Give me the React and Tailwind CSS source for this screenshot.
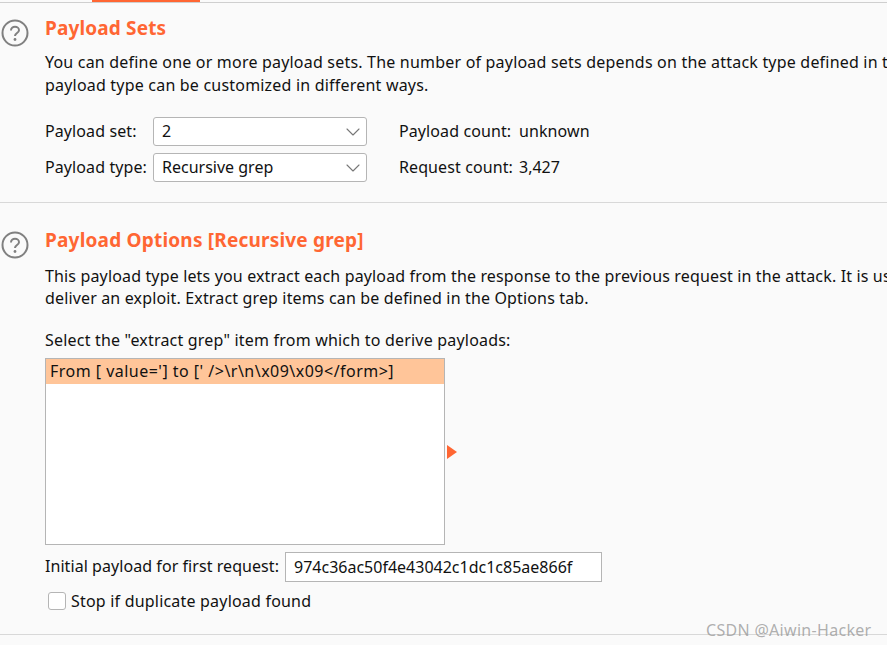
import { ChevronDown } from 'lucide-react';

function HelpIcon() {
  return (
    <svg width="28" height="28" viewBox="0 0 28 28" fill="none" className="shrink-0">
      <circle cx="14" cy="14" r="12.5" stroke="#808080" strokeWidth="2" />
      <path d="M10 11.5c0-2.2 1.8-3.7 4-3.7s4 1.4 4 3.4c0 2.8-4 2.9-4 5.8" stroke="#808080" strokeWidth="2" />
      <circle cx="14" cy="20.5" r="1.4" fill="#808080" />
    </svg>
  );
}

function Dropdown({ value }) {
  return (
    <div className="w-[214px] h-[29px] bg-white border border-[#b5b5b5] rounded-[3px] flex items-center justify-between pl-2 pr-[1px]">
      <span className="pb-[2px]">{value}</span>
      <ChevronDown size={24} strokeWidth={1.1} color="#777777" />
    </div>
  );
}

export default function App() {
  return (
    <div className="h-[645px] w-[887px] overflow-hidden bg-[#fafafa] text-[#111111] text-[16px] leading-[22px] font-['Noto_Sans',sans-serif]">
      {/* tab strip */}
      <div className="h-[3px] border-b border-[#cfcfcf] pl-[92px]">
        <div className="w-[108px] h-[2px] bg-[#ff6633]" />
      </div>

      {/* Payload Sets */}
      <section className="flex gap-[16px] h-[200px] border-b border-[#d8d8d8]">
        <div className="pt-[16px] pl-[1px]"><HelpIcon /></div>
        <div className="min-w-0 flex-1 pt-[13px]">
          <h2 className="text-[19px] leading-[24px] font-bold text-[#ff6633] tracking-[0.15px]">Payload Sets</h2>
          <p className="mt-[11px] whitespace-nowrap tracking-[0.2px]">You can define one or more payload sets. The number of payload sets depends on the attack type defined in the Positions tab.</p>
          <p className="mt-[1px] whitespace-nowrap tracking-[0.2px]">payload type can be customized in different ways.</p>
          <div className="mt-[21px] flex flex-col gap-[7px]">
            <div className="flex items-center">
              <span className="w-[108px] pb-[2px] tracking-[0.1px]">Payload set:</span>
              <Dropdown value="2" />
              <span className="ml-[32px] w-[120px] pb-[2px] tracking-[0.1px]">Payload count:</span>
              <span className="pb-[2px] tracking-[0.1px]">unknown</span>
            </div>
            <div className="flex items-center">
              <span className="w-[108px] pb-[2px] tracking-[0.1px]">Payload type:</span>
              <Dropdown value="Recursive grep" />
              <span className="ml-[32px] w-[120px] pb-[2px] tracking-[0.1px]">Request count:</span>
              <span className="pb-[2px]">3,427</span>
            </div>
          </div>
        </div>
      </section>

      {/* Payload Options */}
      <section className="flex gap-[16px] h-[432px] border-b border-[#d8d8d8]">
        <div className="pt-[28px] pl-[1px]"><HelpIcon /></div>
        <div className="min-w-0 flex-1 pt-[25px]">
          <h2 className="text-[19px] leading-[24px] font-bold text-[#ff6633] tracking-[0.2px]">Payload Options [Recursive grep]</h2>
          <p className="mt-[13px] whitespace-nowrap tracking-[0.15px]">This payload type lets you extract each payload from the response to the previous request in the attack. It is useful in some situations</p>
          <p className="whitespace-nowrap tracking-[0.15px]">deliver an exploit. Extract grep items can be defined in the Options tab.</p>
          <p className="mt-[20px] tracking-[0.2px]">Select the "extract grep" item from which to derive payloads:</p>
          <div className="mt-[7px] flex items-center">
            <div className="w-[400px] h-[187px] bg-white border border-[#b5b5b5]">
              <div className="h-[25px] bg-[#ffc599] pl-[4px] leading-[25px] whitespace-nowrap tracking-[0.48px]">{"From [ value='] to [' />\\r\\n\\x09\\x09</form>]"}</div>
            </div>
            <div className="ml-[2px] w-0 h-0 border-y-[7px] border-y-transparent border-l-[10px] border-l-[#ff6633]" />
          </div>
          <div className="mt-[7px] flex items-center">
            <span className="pb-[2px] tracking-[0.06px]">Initial payload for first request:</span>
            <div className="ml-[6px] w-[317px] h-[30px] bg-white border border-[#b5b5b5] pl-2 leading-[28px]">974c36ac50f4e43042c1dc1c85ae866f</div>
          </div>
          <label className="mt-[8px] flex items-center pl-[3px]">
            <span className="w-[18px] h-[18px] bg-white border border-[#b5b5b5] rounded-[3px]" />
            <span className="ml-[5px] tracking-[0.2px]">Stop if duplicate payload found</span>
          </label>
        </div>
      </section>

      {/* watermark */}
      <div className="absolute left-[706px] top-[619px] text-[16px] leading-[22px] tracking-[0.3px] text-[#9a9a9a]/80">CSDN @Aiwin-Hacker</div>
    </div>
  );
}
